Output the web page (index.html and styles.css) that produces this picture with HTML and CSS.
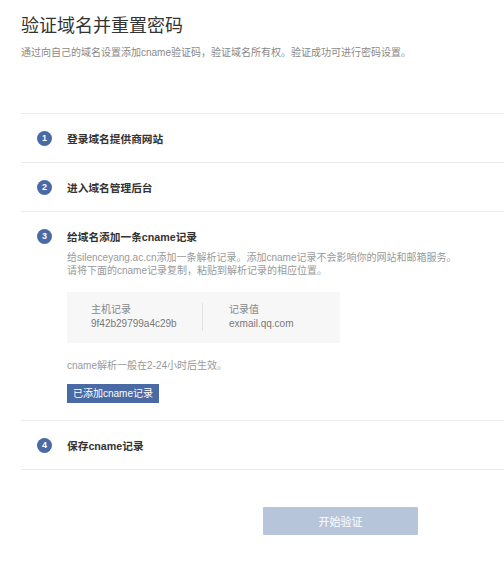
FILE: index.html
```html
<!DOCTYPE html>
<html lang="zh-CN">
<head>
<meta charset="utf-8">
<link rel="stylesheet" href="styles.css">
</head>
<body>
<div class="page">
  <h1 class="title">验证域名并重置密码</h1>
  <p class="subtitle">通过向自己的域名设置添加cname验证码，验证域名所有权。验证成功可进行密码设置。</p>
  <ol class="steps">
    <li class="step">
      <div class="step-head"><span class="num">1</span><span class="step-title">登录域名提供商网站</span></div>
    </li>
    <li class="step">
      <div class="step-head"><span class="num">2</span><span class="step-title">进入域名管理后台</span></div>
    </li>
    <li class="step step-open">
      <div class="step-head"><span class="num">3</span><span class="step-title">给域名添加一条cname记录</span></div>
      <div class="step-body">
        <p class="desc">给silenceyang.ac.cn添加一条解析记录。添加cname记录不会影响你的网站和邮箱服务。<br>请将下面的cname记录复制，粘贴到解析记录的相应位置。</p>
        <div class="record">
          <div class="rec-col rec-host">
            <div class="rec-label">主机记录</div>
            <div class="rec-value">9f42b29799a4c29b</div>
          </div>
          <div class="rec-col rec-val">
            <div class="rec-label">记录值</div>
            <div class="rec-value">exmail.qq.com</div>
          </div>
        </div>
        <p class="note">cname解析一般在2-24小时后生效。</p>
        <button class="btn-added">已添加cname记录</button>
      </div>
    </li>
    <li class="step">
      <div class="step-head"><span class="num">4</span><span class="step-title">保存cname记录</span></div>
    </li>
  </ol>
  <div class="actions">
    <button class="btn-verify">开始验证</button>
  </div>
</div>
</body>
</html>
```
FILE: styles.css
```css
html, body {
  margin: 0;
  padding: 0;
  background: #fff;
}
body {
  font-family: "Liberation Sans", "Noto Sans CJK SC", sans-serif;
  color: #333;
}
.page {
  padding: 16px 0 0 21px;
}
.title {
  margin: 0;
  font-size: 18px;
  line-height: 20px;
  font-weight: normal;
  color: #333;
}
.subtitle {
  margin: 10px 0 0;
  font-size: 10px;
  line-height: 14px;
  color: #888;
}
.steps {
  list-style: none;
  margin: 53px 0 0;
  padding: 0;
  border-top: 1px solid #ebebeb;
}
.step {
  border-bottom: 1px solid #ebebeb;
  padding: 17px 0 17px;
}
.step-open {
  padding-bottom: 17px;
}
.step-head {
  display: flex;
  align-items: center;
  height: 14px;
  padding-left: 16px;
}
.num {
  width: 15px;
  height: 15px;
  border-radius: 50%;
  background: #4a6aa5;
  color: #fff;
  font-size: 9px;
  font-weight: bold;
  line-height: 15px;
  text-align: center;
  flex: none;
}
.step-title {
  margin-left: 15px;
  font-size: 10.7px;
  font-weight: bold;
  color: #333;
}
.step-body {
  padding-left: 46px;
}
.desc {
  margin: 8px 0 0;
  font-size: 10px;
  line-height: 13px;
  color: #999;
}
.record {
  margin-top: 15px;
  width: 273px;
  background: #f7f7f7;
  padding: 11px 0 12px;
  display: flex;
}
.rec-col {
  font-size: 10px;
  line-height: 14px;
}
.rec-host {
  width: 111px;
  padding-left: 24px;
  border-right: 1px solid #e2e2e2;
}
.rec-val {
  padding-left: 26px;
}
.rec-label {
  color: #888;
}
.rec-value {
  color: #777;
}
.note {
  margin: 16px 0 0;
  font-size: 10px;
  line-height: 13px;
  color: #999;
}
.btn-added {
  display: block;
  margin-top: 12px;
  width: 92px;
  height: 19px;
  padding: 0;
  border: none;
  background: #4a6aa5;
  color: #fff;
  font-family: inherit;
  font-size: 10px;
  line-height: 19px;
}
.actions {
  padding: 37px 0 0 242px;
}
.btn-verify {
  width: 155px;
  height: 28px;
  border: none;
  padding: 0;
  border-radius: 1px;
  background: #b7c5db;
  color: #fff;
  font-family: inherit;
  font-size: 11px;
}
```
